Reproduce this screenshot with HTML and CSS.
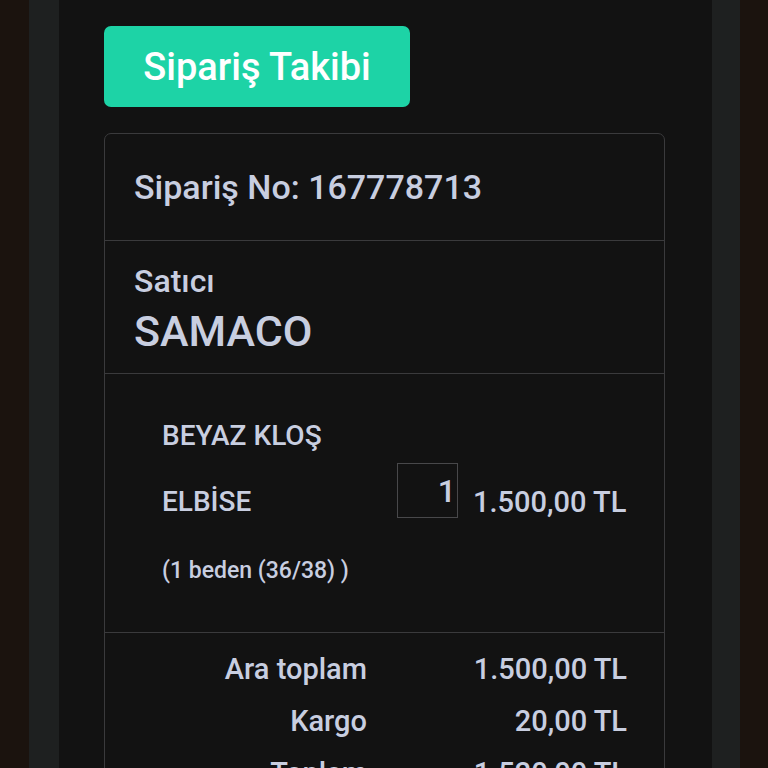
FILE: index.html
```html
<!DOCTYPE html>
<html lang="tr">
<head>
<meta charset="utf-8">
<link rel="stylesheet" href="styles.css">
</head>
<body>
<div class="frame">
  <div class="rail">
    <main class="page">
      <button class="title-btn">Sipariş Takibi</button>
      <section class="card">
        <div class="sec sec-order">Sipariş No: 167778713</div>
        <div class="sec sec-seller">
          <div class="seller-label">Satıcı</div>
          <div class="seller-name">SAMACO</div>
        </div>
        <div class="sec sec-item">
          <div class="item-row">
            <div class="item-name">BEYAZ KLOŞ ELBİSE</div>
            <div class="qty">1</div>
            <div class="price">1.500,00 TL</div>
          </div>
          <div class="item-variant">(1 beden (36/38) )</div>
        </div>
        <div class="sec sec-totals">
          <div class="tot-row"><span class="tot-label">Ara toplam</span><span class="tot-val">1.500,00 TL</span></div>
          <div class="tot-row"><span class="tot-label">Kargo</span><span class="tot-val">20,00 TL</span></div>
          <div class="tot-row"><span class="tot-label">Toplam</span><span class="tot-val">1.520,00 TL</span></div>
        </div>
      </section>
    </main>
  </div>
</div>
</body>
</html>
```
FILE: styles.css
```css
html, body {
  margin: 0;
  padding: 0;
  height: 100%;
  overflow: hidden;
}
body {
  background: #1b130e;
  font-family: Roboto, "Liberation Sans", sans-serif;
  color: #c8cee0;
}
.frame {
  height: 768px;
  padding: 0 28px 0 29px;
}
.rail {
  background: #1e2020;
  height: 100%;
  padding: 0 28px 0 30px;
}
.page {
  background: #121212;
  height: 100%;
  padding: 26px 47px 0 45px;
}
.title-btn {
  display: block;
  width: 306px;
  height: 81px;
  border: 0;
  border-radius: 7px;
  background: #1dd3a6;
  color: #ffffff;
  font-family: Roboto, "Liberation Sans", sans-serif;
  font-weight: 500;
  font-size: 38px;
  padding: 0;
  margin: 0 0 26px 0;
}
.card {
  border: 1px solid #3a3a3c;
  border-radius: 7px;
}
.sec {
  border-top: 1px solid #3a3a3c;
}
.sec:first-child {
  border-top: 0;
}
.sec-order {
  height: 106px;
  box-sizing: border-box;
  padding: 0 29px;
  display: flex;
  align-items: center;
  font-size: 34px;
  font-weight: 500;
}
.sec-seller {
  height: 133px;
  box-sizing: border-box;
  padding: 20px 29px 0;
}
.seller-label {
  font-size: 32px;
  font-weight: 500;
  line-height: 40px;
}
.seller-name {
  font-size: 43px;
  font-weight: 500;
  line-height: 52px;
  margin-top: 4px;
}
.sec-item {
  height: 259px;
  box-sizing: border-box;
  padding: 29px 37px 0 57px;
}
.item-row {
  display: flex;
  align-items: flex-start;
}
.item-name {
  width: 210px;
  font-size: 28px;
  font-weight: 500;
  line-height: 66px;
  margin-right: 25px;
}
.qty {
  width: 58px;
  height: 53px;
  border: 1px solid #48484a;
  font-size: 32px;
  font-weight: 500;
  text-align: right;
  line-height: 55px;
  padding-right: 1px;
  margin-top: 60px;
  box-sizing: content-box;
}
.price {
  margin-left: 15px;
  margin-top: 66px;
  font-size: 29px;
  font-weight: 500;
  line-height: 66px;
}
.item-variant {
  font-size: 23px;
  font-weight: 500;
  line-height: 40px;
  margin-top: 16px;
}
.sec-totals {
  padding: 10px 37px 0 0;
}
.tot-row {
  display: flex;
  justify-content: flex-end;
  font-size: 29px;
  font-weight: 500;
  line-height: 52px;
}
.tot-label {
  text-align: right;
  width: 260px;
}
.tot-val {
  text-align: right;
  width: 260px;
}
```
